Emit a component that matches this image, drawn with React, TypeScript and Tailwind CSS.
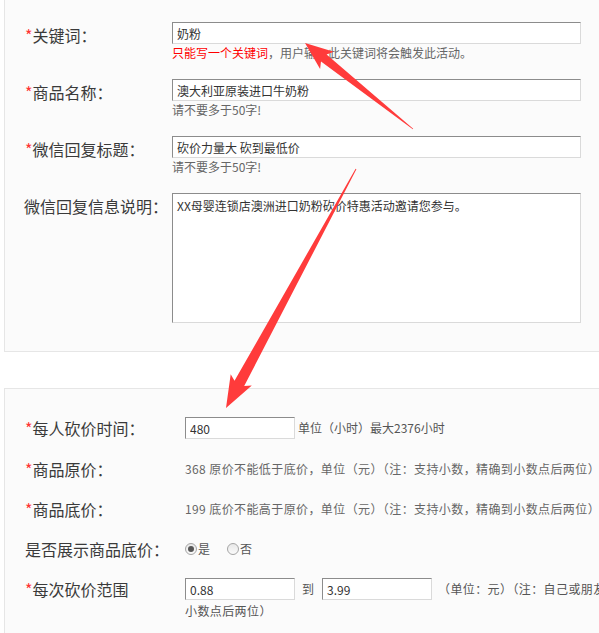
import React from 'react';

type Pt = [number, number];

// tapered annotation arrow, thin at the tail and wide at the head
const arrowPoints = (tail: Pt, tip: Pt, head: number, headHalf: number, shaftHalf: number) => {
  const dx = tip[0] - tail[0];
  const dy = tip[1] - tail[1];
  const len = Math.hypot(dx, dy);
  const ux = dx / len;
  const uy = dy / len;
  const nx = -uy;
  const ny = ux;
  const bx = tip[0] - ux * head;
  const by = tip[1] - uy * head;
  const pts: Pt[] = [
    [tail[0] + nx * 0.4, tail[1] + ny * 0.4],
    [bx + nx * shaftHalf, by + ny * shaftHalf],
    [bx - ux * 4 + nx * headHalf, by - uy * 4 + ny * headHalf],
    tip,
    [bx - ux * 4 - nx * headHalf, by - uy * 4 - ny * headHalf],
    [bx - nx * shaftHalf, by - ny * shaftHalf],
    [tail[0] - nx * 0.4, tail[1] - ny * 0.4],
  ];
  return pts.map((p) => `${p[0].toFixed(1)},${p[1].toFixed(1)}`).join(' ');
};

const inputCls =
  'block h-[22px] border border-t-[#8c8c8c] border-l-[#8c8c8c] border-b-[#dadada] border-r-[#dadada] bg-white px-[4px] text-[12px] leading-[20px] text-[#333]';

const Star = () => <span className="text-[#ff3333]">*</span>;

const Radio: React.FC<{ checked?: boolean }> = ({ checked }) => (
  <span className="flex h-[12px] w-[12px] items-center justify-center rounded-full border border-[#a5a5a5] bg-gradient-to-b from-[#e8e8e8] to-[#fafafa]">
    {checked && <span className="h-[6px] w-[6px] rounded-full bg-[#555]" />}
  </span>
);

export default function App() {
  return (
    <div className="relative h-[633px] w-[599px] overflow-hidden bg-white font-['Noto_Sans_CJK_SC',sans-serif] text-[#3a3a3a]">
      <div className="-mt-px ml-[4px] w-[640px] border border-[#e6e6e6] bg-[#fbfbfb] pb-[28px] pl-[20px] pt-[22px]">
        <div className="grid grid-cols-[147px_1fr]">
          <div className="pt-[2px] text-[16px] leading-[22px]">
            <Star />关键词：
          </div>
          <div>
            <input className={`${inputCls} w-[409px]`} defaultValue="奶粉" />
            <p className="text-[12px] leading-[18px] text-[#666]">
              <span className="text-[#ff0000]">只能写一个关键词</span>，用户输入此关键词将会触发此活动。
            </p>
          </div>
        </div>
        <div className="mt-[17px] grid grid-cols-[147px_1fr]">
          <div className="pt-[2px] text-[16px] leading-[22px]">
            <Star />商品名称：
          </div>
          <div>
            <input className={`${inputCls} w-[409px]`} defaultValue="澳大利亚原装进口牛奶粉" />
            <p className="text-[12px] leading-[18px] text-[#666]">请不要多于50字!</p>
          </div>
        </div>
        <div className="mt-[17px] grid grid-cols-[147px_1fr]">
          <div className="pt-[2px] text-[16px] leading-[22px]">
            <Star />微信回复标题：
          </div>
          <div>
            <input className={`${inputCls} w-[409px]`} defaultValue="砍价力量大 砍到最低价" />
            <p className="text-[12px] leading-[18px] text-[#666]">请不要多于50字!</p>
          </div>
        </div>
        <div className="mt-[17px] grid grid-cols-[147px_1fr]">
          <div className="-ml-px pt-[2px] text-[16px] leading-[22px]">微信回复信息说明：</div>
          <textarea
            className="block h-[130px] w-[409px] resize-none border border-t-[#8c8c8c] border-l-[#8c8c8c] border-b-[#dadada] border-r-[#dadada] bg-white px-[4px] py-[3px] text-[12px] leading-[18px] text-[#333]"
            defaultValue="XX母婴连锁店澳洲进口奶粉砍价特惠活动邀请您参与。"
          />
        </div>
      </div>

      <div className="ml-[4px] mt-[36px] w-[640px] border border-[#e6e6e6] bg-[#fbfbfb] pb-[20px] pl-[20px] pt-[28px]">
        <div className="grid grid-cols-[160px_1fr]">
          <div className="text-[16px] leading-[22px]">
            <Star />每人砍价时间：
          </div>
          <div className="flex items-center gap-[3px]">
            <input className={`${inputCls} w-[110px]`} defaultValue="480" />
            <span className="text-[12px] leading-[22px] text-[#555]">单位（小时）最大2376小时</span>
          </div>
        </div>
        <div className="mt-[19px] grid grid-cols-[160px_1fr]">
          <div className="text-[16px] leading-[22px]">
            <Star />商品原价：
          </div>
          <div className="whitespace-nowrap text-[12px] leading-[22px] tracking-[0.4px] text-[#666]">
            368 原价不能低于底价，单位（元）（注：支持小数，精确到小数点后两位）
          </div>
        </div>
        <div className="mt-[18px] grid grid-cols-[160px_1fr]">
          <div className="text-[16px] leading-[22px]">
            <Star />商品底价：
          </div>
          <div className="whitespace-nowrap text-[12px] leading-[22px] tracking-[0.4px] text-[#666]">
            199 底价不能高于原价，单位（元）（注：支持小数，精确到小数点后两位）
          </div>
        </div>
        <div className="mt-[18px] grid grid-cols-[160px_1fr]">
          <div className="text-[16px] leading-[22px]">是否展示商品底价：</div>
          <div className="flex items-center text-[12px] leading-[22px] text-[#555]">
            <Radio checked />
            <span className="ml-[1px]">是</span>
            <span className="ml-[17px]">
              <Radio />
            </span>
            <span className="ml-[1px]">否</span>
          </div>
        </div>
        <div className="mt-[18px] grid grid-cols-[160px_1fr]">
          <div className="text-[16px] leading-[22px]">
            <Star />每次砍价范围
          </div>
          <div>
            <div className="flex items-center whitespace-nowrap text-[12px] leading-[22px] text-[#555]">
              <input className={`${inputCls} w-[110px]`} defaultValue="0.88" />
              <span className="ml-[7px] mr-[8px]">到</span>
              <input className={`${inputCls} w-[110px]`} defaultValue="3.99" />
              <span className="ml-[6px] tracking-[0.4px]">（单位：元）（注：自己或朋友每次砍价的金额范围，精确到</span>
            </div>
            <p className="mt-[2px] text-[12px] leading-[18px] tracking-[0.4px] text-[#555]">小数点后两位）</p>
          </div>
        </div>
      </div>

      <svg className="pointer-events-none absolute left-0 top-0" width="599" height="633" viewBox="0 0 599 633">
        <polygon points={arrowPoints([413, 129], [305, 43], 24, 11, 4.5)} fill="#ff3b3b" />
        <polygon points={arrowPoints([356, 169], [226, 408], 28, 12, 5.5)} fill="#ff3b3b" />
      </svg>
    </div>
  );
}
